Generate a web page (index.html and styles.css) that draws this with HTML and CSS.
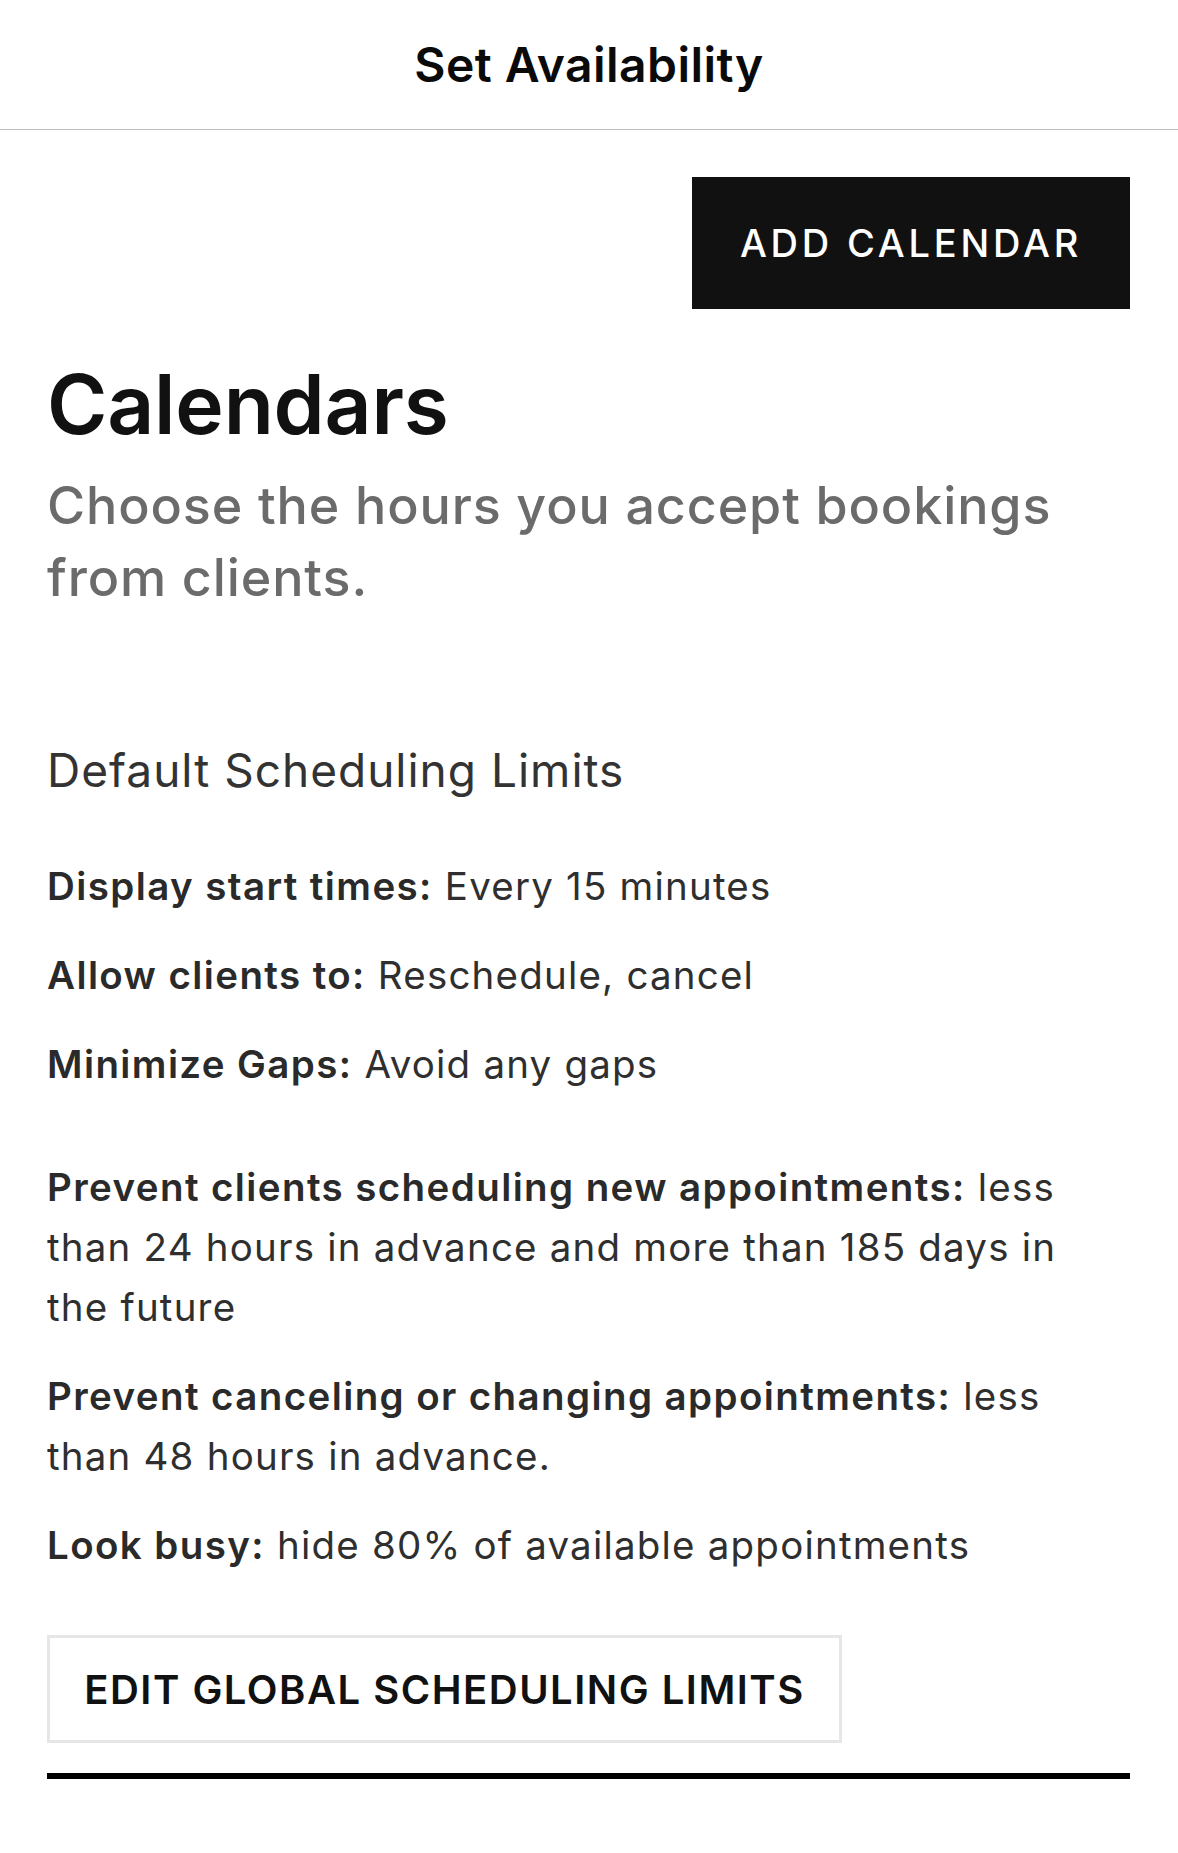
FILE: index.html
```html
<!DOCTYPE html>
<html lang="en">
<head>
<meta charset="utf-8">
<title>Set Availability</title>
<link rel="stylesheet" href="styles.css">
</head>
<body>
<header class="topbar">
  <h1 class="topbar-title">Set Availability</h1>
</header>
<main class="content">
  <div class="actions">
    <button class="btn-primary" type="button">ADD CALENDAR</button>
  </div>
  <h2 class="page-title">Calendars</h2>
  <p class="page-subtitle">Choose the hours you accept bookings from clients.</p>

  <h3 class="section-title">Default Scheduling Limits</h3>

  <div class="limits">
    <p class="limit"><span class="label">Display start times:</span> Every 15 minutes</p>
    <p class="limit"><span class="label">Allow clients to:</span> Reschedule, cancel</p>
    <p class="limit"><span class="label">Minimize Gaps:</span> Avoid any gaps</p>
  </div>
  <div class="limits limits-second">
    <p class="limit"><span class="label">Prevent clients scheduling new appointments:</span> less than 24 hours in advance and more than 185 days in the future</p>
    <p class="limit"><span class="label">Prevent canceling or changing appointments:</span> less than 48 hours in advance.</p>
    <p class="limit"><span class="label">Look busy:</span> hide 80% of available appointments</p>
  </div>

  <button class="btn-outline" type="button">EDIT GLOBAL SCHEDULING LIMITS</button>
  <div class="rule"></div>
</main>
</body>
</html>
```
FILE: styles.css
```css
* {
  box-sizing: border-box;
}

html, body {
  margin: 0;
  padding: 0;
  background: #ffffff;
}

body {
  font-family: Inter, "Noto Sans", "Liberation Sans", sans-serif;
  color: #333333;
}

.topbar {
  height: 130px;
  border-bottom: 1px solid #bdbdbd;
  display: flex;
  align-items: center;
  justify-content: center;
}

.topbar-title {
  margin: 0;
  font-size: 48px;
  font-weight: 600;
  color: #0a0a0a;
  line-height: 1;
  letter-spacing: 0.45px;
}

.content {
  padding: 0 48px 0 47px;
}

.actions {
  display: flex;
  justify-content: flex-end;
  padding-top: 47px;
}

.btn-primary {
  width: 438px;
  height: 132px;
  border: none;
  background: #111111;
  color: #ffffff;
  font-family: inherit;
  font-size: 38px;
  font-weight: 500;
  letter-spacing: 3.8px;
  padding: 0;
  cursor: pointer;
}

.page-title {
  margin: 55px 0 0;
  font-size: 82px;
  line-height: 82px;
  font-weight: 600;
  color: #111111;
  letter-spacing: -0.2px;
}

.page-subtitle {
  margin: 24px 0 0;
  font-size: 52px;
  line-height: 72px;
  font-weight: 500;
  color: #6b6b6b;
  letter-spacing: 0.9px;
  max-width: 1060px;
}

.section-title {
  margin: 126px 0 0;
  font-size: 46px;
  line-height: 60px;
  font-weight: 400;
  color: #333333;
  letter-spacing: 1px;
}

.limits {
  margin-top: 56px;
  display: flex;
  flex-direction: column;
  gap: 29px;
}

.limits-second {
  margin-top: 63px;
}

.limit {
  margin: 0;
  max-width: 1070px;
  font-size: 38.5px;
  line-height: 60px;
  font-weight: 400;
  color: #2f2f2f;
  letter-spacing: 1.2px;
}

.label {
  font-weight: 600;
  color: #2a2a2a;
  letter-spacing: 1.4px;
}

.btn-outline {
  display: block;
  margin-top: 60px;
  width: 795px;
  height: 108px;
  background: #ffffff;
  border: 3px solid #e6e6e6;
  color: #111111;
  font-family: inherit;
  font-size: 40px;
  font-weight: 600;
  letter-spacing: 1.5px;
  padding: 0;
  text-align: center;
  cursor: pointer;
}

.rule {
  margin-top: 30px;
  height: 6px;
  background: #000000;
}
```
